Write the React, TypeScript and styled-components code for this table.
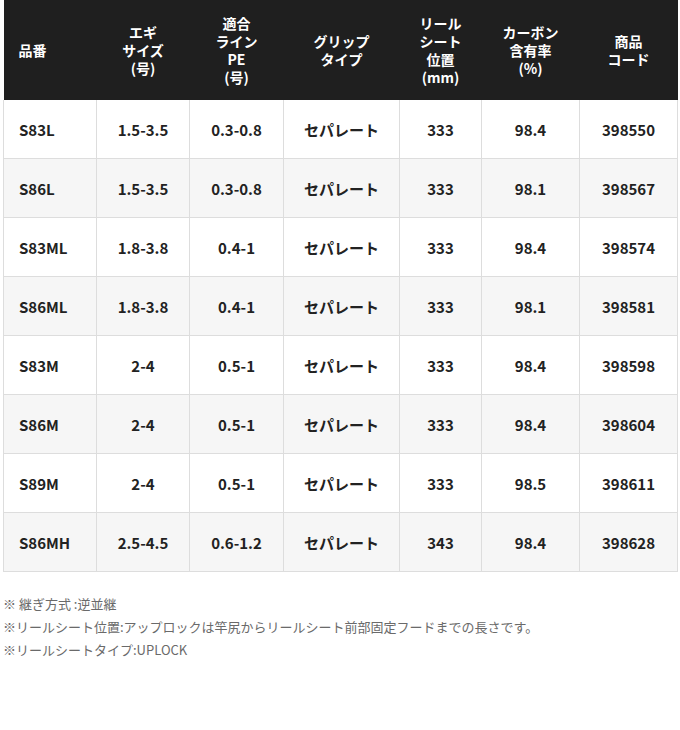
import React from "react";
import styled, { createGlobalStyle } from "styled-components";

const GlobalStyle = createGlobalStyle`
  html, body {
    margin: 0;
    padding: 0;
    background: #fff;
    font-family: "Noto Sans CJK JP", "Noto Sans", sans-serif;
  }
`;

const Wrap = styled.div`
  padding: 0 3px;
`;

const Table = styled.table`
  width: 674px;
  border-collapse: collapse;
  table-layout: fixed;
`;

const Th = styled.th<{ $left?: boolean }>`
  background: #1f1f1f;
  color: #fff;
  font-size: 14px;
  font-weight: 700;
  line-height: 18px;
  height: 100px;
  padding: 0;
  text-align: ${(p) => (p.$left ? "left" : "center")};
  padding-left: ${(p) => (p.$left ? "15px" : "0")};
  vertical-align: middle;
`;

const Tr = styled.tr<{ $even: boolean }>`
  background: ${(p) => (p.$even ? "#f6f6f6" : "#fff")};
`;

const Td = styled.td<{ $left?: boolean }>`
  height: 58px;
  padding: 0;
  border: 1px solid #dddddd;
  border-top: none;
  color: #222;
  font-size: 15px;
  font-weight: 700;
  text-align: ${(p) => (p.$left ? "left" : "center")};
  padding-left: ${(p) => (p.$left ? "15px" : "0")};
  vertical-align: middle;
`;

const Notes = styled.div`
  margin-top: 20px;
  color: #6a6a6a;
  font-size: 13px;
  line-height: 23px;
`;

const widths = [93, 93, 94, 116, 82, 98, 98];

const headers: string[][] = [
  ["品番"],
  ["エギ", "サイズ", "(号)"],
  ["適合", "ライン", "PE", "(号)"],
  ["グリップ", "タイプ"],
  ["リール", "シート", "位置", "(mm)"],
  ["カーボン", "含有率", "(%)"],
  ["商品", "コード"],
];

const rows: string[][] = [
  ["S83L", "1.5-3.5", "0.3-0.8", "セパレート", "333", "98.4", "398550"],
  ["S86L", "1.5-3.5", "0.3-0.8", "セパレート", "333", "98.1", "398567"],
  ["S83ML", "1.8-3.8", "0.4-1", "セパレート", "333", "98.4", "398574"],
  ["S86ML", "1.8-3.8", "0.4-1", "セパレート", "333", "98.1", "398581"],
  ["S83M", "2-4", "0.5-1", "セパレート", "333", "98.4", "398598"],
  ["S86M", "2-4", "0.5-1", "セパレート", "333", "98.4", "398604"],
  ["S89M", "2-4", "0.5-1", "セパレート", "333", "98.5", "398611"],
  ["S86MH", "2.5-4.5", "0.6-1.2", "セパレート", "343", "98.4", "398628"],
];

export default function App() {
  return (
    <>
      <GlobalStyle />
      <Wrap>
        <Table>
          <colgroup>
            {widths.map((w, i) => (
              <col key={i} style={{ width: w }} />
            ))}
          </colgroup>
          <thead>
            <tr>
              {headers.map((h, i) => (
                <Th key={i} $left={i === 0}>
                  {h.map((line, j) => (
                    <React.Fragment key={j}>
                      {j > 0 && <br />}
                      {line}
                    </React.Fragment>
                  ))}
                </Th>
              ))}
            </tr>
          </thead>
          <tbody>
            {rows.map((r, i) => (
              <Tr key={i} $even={i % 2 === 1}>
                {r.map((c, j) => (
                  <Td key={j} $left={j === 0}>
                    {c}
                  </Td>
                ))}
              </Tr>
            ))}
          </tbody>
        </Table>
        <Notes>
          <div>※ 継ぎ方式 :逆並継</div>
          <div>※リールシート位置:アップロックは竿尻からリールシート前部固定フードまでの長さです。</div>
          <div>※リールシートタイプ:UPLOCK</div>
        </Notes>
      </Wrap>
    </>
  );
}
